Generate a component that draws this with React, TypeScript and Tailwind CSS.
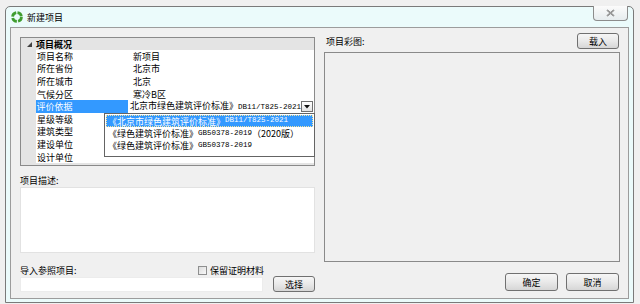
import React from 'react'

const cjk = "font-['Noto_Sans_CJK_SC','Noto_Sans',sans-serif]"
const mono = "font-['Liberation_Mono',monospace] text-[7.5px]"

const rows = [
  { label: '项目名称', value: '新项目' },
  { label: '所在省份', value: '北京市' },
  { label: '所在城市', value: '北京' },
  { label: '气候分区', value: '寒冷B区' },
  { label: '评价依据', value: 'combo' },
  { label: '星级等级', value: '' },
  { label: '建筑类型', value: '' },
  { label: '建设单位', value: '' },
  { label: '设计单位', value: '' },
]

function Btn({ children, className = '' }: { children: React.ReactNode; className?: string }) {
  return (
    <div
      className={`flex items-center justify-center rounded-[3px] border border-[#707070] bg-gradient-to-b from-[#f6f6f6] via-[#e9e9e9] to-[#d6d6d6] text-[9px] leading-none text-black ${className}`}
    >
      {children}
    </div>
  )
}

function TitleIcon() {
  return (
    <svg width="12" height="12" viewBox="0 0 12 12">
      <circle cx="6" cy="6" r="4.4" fill="none" stroke="#3f9d2f" strokeWidth="2.8" strokeDasharray="5.6 1.3" />
      <circle cx="6" cy="6" r="1.5" fill="#eafafa" />
    </svg>
  )
}

export default function App() {
  return (
    <div className={`w-[640px] h-[304px] overflow-hidden bg-[#f0f0f0] pt-[6px] pl-[5px] ${cjk}`}>
      <div className="relative flex h-[297px] w-[629px] flex-col rounded-t-[5px] border border-[#7a7a7a] bg-[#ebfbfb] px-[4px] pb-[3px]">
        {/* title bar */}
        <div className="flex h-[20px] items-center gap-[4px] pl-[1px]">
          <TitleIcon />
          <span className="text-[9px] leading-none text-black">新建项目</span>
        </div>
        <div className="absolute right-[5px] top-[-1px] flex h-[15px] w-[35px] items-center justify-center rounded-b-[4px] border border-t-0 border-[#8c8c8c] bg-gradient-to-b from-[#fbfbfb] to-[#e6ecee]">
          <svg width="9" height="8" viewBox="0 0 9 8">
            <path d="M1 1 L8 7 M8 1 L1 7" stroke="#6a6a6a" strokeWidth="1.6" />
            <path d="M1 1 L8 7 M8 1 L1 7" stroke="#d8d8d8" strokeWidth="0.5" />
          </svg>
        </div>

        {/* client area */}
        <div className="flex flex-1 gap-[9px] border border-[#9c9c9c] bg-[#f0f0f0] pl-[9px] pr-[7px] pt-[5px]">
          {/* left column */}
          <div className="flex w-[295px] flex-col pt-[4px]">
            <div className="relative h-[129px] border border-[#8a8a8a] bg-[#e4e4e4]">
              <div className="flex h-[12px] items-center">
                <div className="flex w-[15px] justify-center pl-[2px]">
                  <svg width="5" height="5" viewBox="0 0 5 5">
                    <path d="M5 0 L5 5 L0 5 Z" fill="#404040" />
                  </svg>
                </div>
                <span className="text-[9px] font-bold leading-none text-black">项目概况</span>
              </div>
              {rows.map((r) => {
                const sel = r.value === 'combo'
                return (
                  <div key={r.label} className="flex h-[12.6px]">
                    <div className="w-[15px]" />
                    <div
                      className={`flex w-[95px] items-center pl-[1px] text-[9px] leading-none ${
                        sel ? 'bg-[#3399ff] text-white' : 'bg-white text-black'
                      }`}
                    >
                      {r.label}
                    </div>
                    <div className="flex flex-1 items-center bg-white pl-[2px] text-[9px] leading-none text-black">
                      {sel ? (
                        <div className="flex w-full items-center justify-between pr-[1px]">
                          <span className="whitespace-nowrap">
                            北京市绿色建筑评价标准》<span className={mono}>DB11/T825-2021</span>
                          </span>
                          <div className="flex h-[11px] w-[12px] items-center justify-center border border-[#707070] bg-gradient-to-b from-white to-[#e4e4e4]">
                            <svg width="6" height="4" viewBox="0 0 6 4">
                              <path d="M0 0 L6 0 L3 3.5 Z" fill="#111" />
                            </svg>
                          </div>
                        </div>
                      ) : (
                        r.value
                      )}
                    </div>
                  </div>
                )
              })}

              {/* dropdown list */}
              <div className="absolute left-[83px] top-[75px] flex h-[44px] w-[211px] flex-col border border-[#646464] bg-white p-[1px] text-[9px] leading-none">
                <div className="flex h-[12px] items-center border border-dotted border-[#f3e4a0] bg-[#3399ff] pl-[1px] text-white whitespace-nowrap">
                  《北京市绿色建筑评价标准》<span className={mono}>DB11/T825-2021</span>
                </div>
                <div className="flex h-[12.5px] items-center pl-[2px] text-black whitespace-nowrap">
                  《绿色建筑评价标准》<span className={mono}>GB50378-2019</span>（2020版）
                </div>
                <div className="flex h-[12.5px] items-center pl-[2px] text-black whitespace-nowrap">
                  《绿色建筑评价标准》<span className={mono}>GB50378-2019</span>
                </div>
              </div>
            </div>

            <div className="mt-[8px] flex h-[12px] items-center text-[9px] leading-none text-black">项目描述:</div>
            <div className="mt-[1px] h-[66px] border border-[#e2e2e2] bg-white" />

            <div className="mt-[11px] flex h-[12px] items-center justify-between text-[9px] leading-none text-black">
              <span>导入参照项目:</span>
              <div className="mr-[51px] flex items-center gap-[3px]">
                <div className="h-[9px] w-[9px] border border-[#8e8f8f] bg-gradient-to-br from-[#dcdcdc] to-[#f8f8f8]" />
                <span>保留证明材料</span>
              </div>
            </div>
            <div className="flex items-start justify-between">
              <div className="mt-[1px] h-[15px] w-[243px] border border-[#ececec] bg-white" />
              <Btn className="h-[16px] w-[42px]">选择</Btn>
            </div>
          </div>

          {/* right column */}
          <div className="flex w-[296px] flex-col">
            <div className="flex h-[16px] items-center justify-between">
              <span className="pl-[2px] text-[9px] leading-none text-black">项目彩图:</span>
              <Btn className="mr-[1px] h-[16px] w-[42px]">载入</Btn>
            </div>
            <div className="mt-[3px] h-[210px] border border-[#8a8a8a] bg-[#f0f0f0]" />
            <div className="mt-[11px] flex justify-end gap-[8px] pr-[1px]">
              <Btn className="h-[18px] w-[53px]">确定</Btn>
              <Btn className="h-[18px] w-[53px]">取消</Btn>
            </div>
          </div>
        </div>
      </div>
    </div>
  )
}
